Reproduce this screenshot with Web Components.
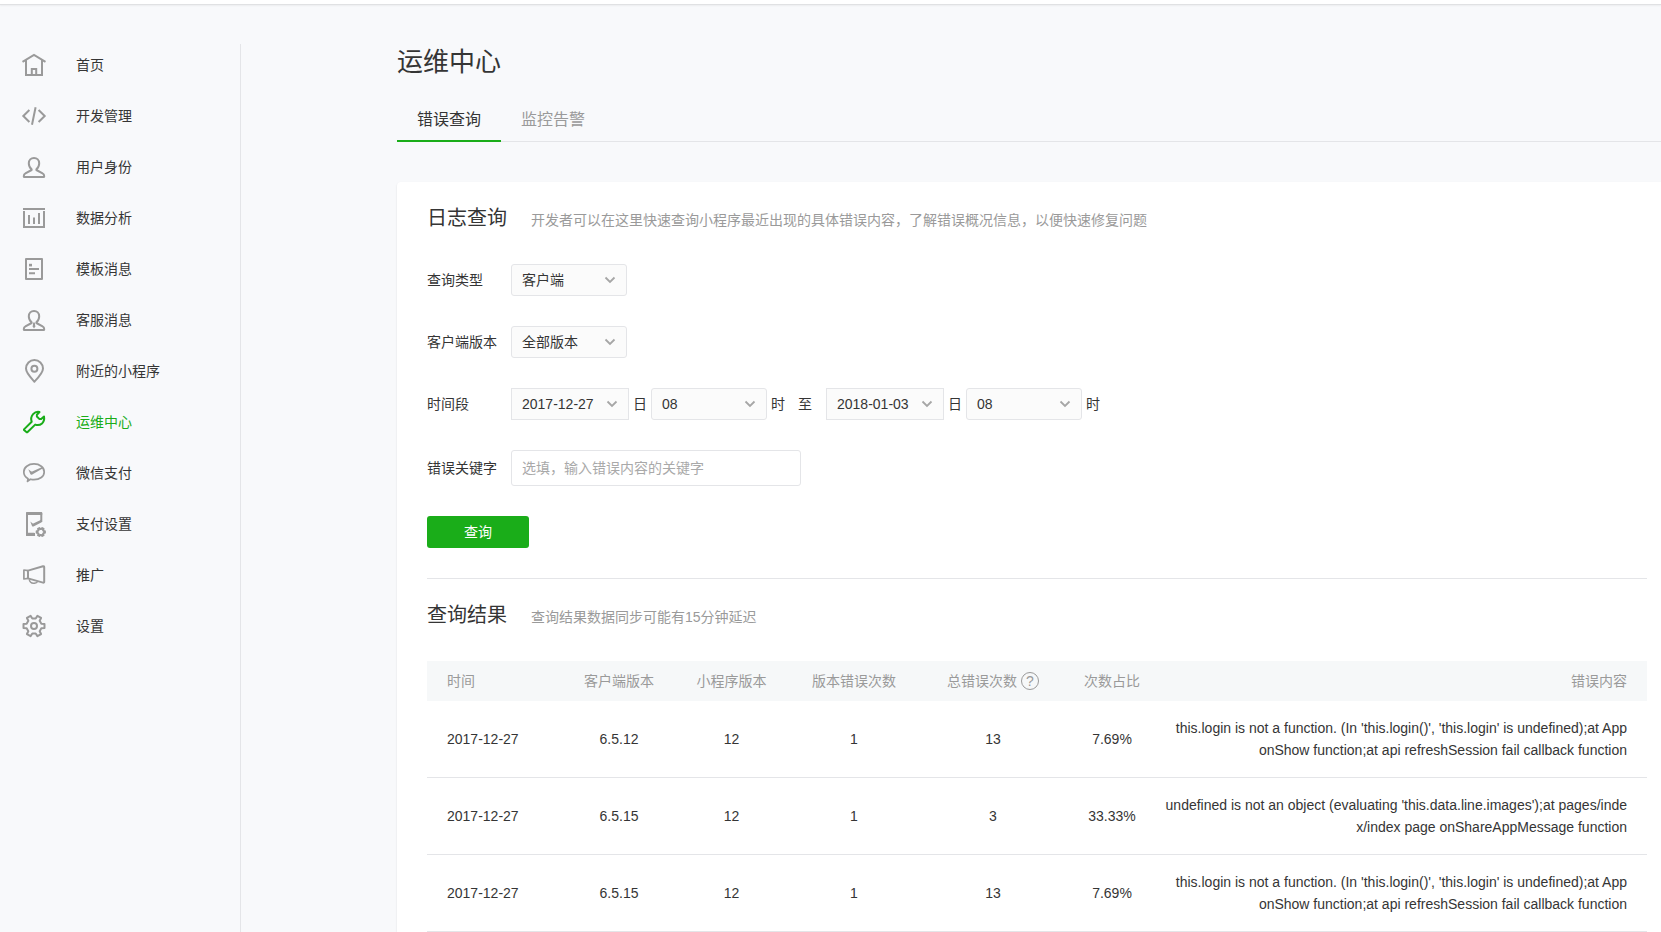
<!DOCTYPE html>
<html lang="zh-CN">
<head>
<meta charset="utf-8">
<meta name="viewport" content="width=device-width, initial-scale=1">
<title>运维中心</title>
<style>
  :root {
    --green: #1aad19;
    --text: #353535;
    --muted: #9a9a9a;
    --line: #e4e5e8;
    --page: #f8f9fb;
  }
  body {
    margin: 0;
    background: var(--page);
    color: var(--text);
    font: 14px/22px "Liberation Sans", "Noto Sans CJK SC", sans-serif;
  }
</style>
</head>
<body>
<ops-app></ops-app>

<script>
const define = (name, html, setup) => {
  const template = document.createElement('template');
  template.innerHTML = '<style>*{box-sizing:border-box}</style>' + html;
  customElements.define(name, class extends HTMLElement {
    constructor() {
      super();
      this.attachShadow({ mode: 'open' }).append(template.content.cloneNode(true));
    }
    connectedCallback() {
      if (setup && !this.ready) { this.ready = true; setup(this, this.shadowRoot); }
    }
  });
};

/* ---------- icons ---------- */
const gear = (cx, cy, outer, inner, teeth) => {
  const points = [];
  const step = Math.PI * 2 / teeth;
  for (let i = 0; i < teeth; i++) {
    const a = i * step;
    for (const [offset, r] of [[-0.29, inner], [-0.19, outer], [0.19, outer], [0.29, inner]]) {
      const t = a + offset * step;
      points.push((cx + r * Math.cos(t)).toFixed(2) + ' ' + (cy + r * Math.sin(t)).toFixed(2));
    }
  }
  return 'M' + points.join('L') + 'Z';
};
const person = '<path d="M9.6 14.2C7.6 12.6 6.8 10.3 6.8 8.2C6.8 5 9 2.9 12 2.9S17.2 5 17.2 8.2C17.2 10.3 16.4 12.6 14.4 14.2V15L20.6 18.4C21.8 19 22.2 20 22.2 21V21.5Q22.2 22.1 21.6 22.1H2.4Q1.8 22.1 1.8 21.5V21C1.8 20 2.2 19 3.4 18.4L9.6 15Z"/>';
const ICONS = {
  home: '<path stroke-linejoin="miter" d="M.5 8.8L12 2L23.5 8.8M4 7.6V22H20V7.6M9.8 22V16H14.2V22"/>',
  code: '<path stroke-linejoin="miter" d="M7.4 6L1.3 12L7.4 18M16.6 6L22.7 12L16.6 18M13.6 3.2L10 20.8"/>',
  user: person,
  chart: '<path stroke-linejoin="miter" d="M1 3H23M2 5V21H22V5M7 9V18M12 11.4V18M17 7V18"/>',
  template: '<rect x="4" y="2" width="16" height="20"/><path d="M7 8.1H10" stroke-width="2.6"/><path d="M7 12H17M7 16.2H13"/>',
  service: person + '<path stroke="none" fill="currentColor" d="M11.2 14.6H12.8L13.3 18.6L12 20.4L10.7 18.6Z"/>',
  pin: '<path d="M12.4 22.7C8.4 18.4 4 14 4 9.6C4 4.6 7.8 1 12.4 1S21 4.6 21 9.6C21 14 16.6 18.4 12.4 22.7Z"/><circle cx="12.4" cy="9.7" r="3"/>',
  wrench: '<path d="M2 19.4L9.7 11.8C8.9 9.4 9.4 6 11.1 4.1C12.8 2.2 15.2 1.6 17.5 2L14.9 4.8V6.5L17.5 9.1H19.2L22 6.5C22.5 9.2 21.7 11.8 20 13.4C18 15.2 15.5 15.4 13.2 14.6L5.6 22Q5 22.6 4.4 22L2 20Z"/>',
  pay: '<path d="M5.5 20.4L6.1 17.7C3.4 16.2 1.8 13.7 1.8 10.9C1.8 6.4 6.3 2.9 12 2.9S22.2 6.4 22.2 10.9S17.7 18.7 12 18.7C10.7 18.7 9.5 18.5 8.4 18.2Z" stroke-width="1.7"/><path stroke="none" fill="currentColor" d="M6.3 8.2L9 10.3Q9.8 10.8 10.7 10.3L19.7 6.3L21 7.2L10.2 13.6Q8.9 14.3 8.3 13.1Z"/>',
  paySet: '<path stroke-linejoin="miter" d="M13 22H5V2H19.3V10"/><path stroke="none" fill="currentColor" d="M4 .6Q4 0 4.6 0H19.6Q20.2 0 20.2 .6V3H4ZM4 20.8H12.2L13.2 24H4.6Q4 24 4 23.4ZM8.3 9.6L10.4 11.2Q11 11.6 11.8 11.2L19.7 7.6V10.2L11.5 14.4Q10.5 14.8 10 13.9Z"/><path d="' + gear(18.8, 20, 4.2, 3, 6) + '"/>',
  horn: '<path d="M6 7.6L21 3.2Q22.2 2.9 22.2 4.2V18.7Q22.2 19.9 21 19.6L6 15.4Z"/><path d="M6 7.6L1.9 7V16L6 15.4" stroke-width="1.7"/><path d="M7.2 16.4C7.8 19 10 20.6 12.4 20.2L14.6 19.6L15.4 18.6" stroke-width="1.5"/>',
  gear: '<path d="' + gear(12, 12, 10.7, 7.7, 6) + '"/><circle cx="12" cy="12" r="3"/>'
};
define('nav-icon', `
  <style>
    :host { display: block; width: 24px; height: 24px; }
    svg { display: block; overflow: visible; fill: none; stroke: currentColor; stroke-width: 2; stroke-linejoin: round; }
  </style>
  <svg width="24" height="24" viewBox="0 0 24 24" aria-hidden="true"></svg>`,
  (host, root) => { root.querySelector('svg').innerHTML = ICONS[host.getAttribute('name')]; });

/* ---------- sidebar ---------- */
define('nav-item', `
  <style>
    :host { display: block; --icon: var(--muted); }
    :host([current]) { --icon: var(--green); color: var(--green); }
    a { display: flex; align-items: center; gap: 30px; color: inherit; text-decoration: none; line-height: 24px; }
    nav-icon { color: var(--icon); }
  </style>
  <a href="#"><slot></slot></a>`,
  (host, root) => {
    const link = root.querySelector('a');
    const icon = document.createElement('nav-icon');
    icon.setAttribute('name', host.getAttribute('icon'));
    link.prepend(icon);
    if (host.hasAttribute('current')) link.setAttribute('aria-current', 'page');
  });
define('side-nav', `
  <style>
    :host { display: block; border-right: 1px solid var(--line); }
    nav { display: flex; flex-direction: column; gap: 27px; padding: 9px 22px; }
  </style>
  <nav aria-label="主菜单"><slot></slot></nav>`);

/* ---------- page parts ---------- */
define('tab-bar', `
  <style>
    :host { display: block; border-bottom: 1px solid var(--line); }
    nav { display: flex; font-size: 16px; line-height: 24px; margin-bottom: -1px; }
    a { padding: 10px 20px 8px; border-bottom: 2px solid transparent; color: var(--muted); text-decoration: none; }
    a[aria-current] { color: var(--text); border-color: var(--green); }
  </style>
  <nav><a href="#" aria-current="page">错误查询</a><a href="#">监控告警</a></nav>`);
define('section-head', `
  <style>
    :host { display: flex; align-items: baseline; gap: 24px; color: var(--muted); }
    h2 { margin: 0; font-size: 20px; line-height: 30px; font-weight: 400; color: var(--text); }
  </style>
  <h2><slot name="title"></slot></h2><slot></slot>`);

/* ---------- form ---------- */
const chevron = '<svg width="12" height="8" viewBox="0 0 12 8" aria-hidden="true"><path d="M1.5 1.5L6 6L10.5 1.5"/></svg>';
const boxStyle = `
    .box { display: inline-grid; align-items: center; }
    .box > * { grid-area: 1 / 1; }
    .box svg { justify-self: end; margin-right: 11px; fill: none; stroke: #a6a6a6; stroke-width: 1.8; pointer-events: none; }
    select, button {
      appearance: none; width: 116px; height: 32px; margin: 0; padding: 0 10px;
      font: inherit; color: inherit; text-align: left;
      border: 1px solid var(--line); border-radius: 3px; background: #fbfbfb;
    }`;
define('select-field', `
  <style>
    :host { display: flex; align-items: center; }
    label { width: 84px; }
    ${boxStyle}
  </style>
  <label for="s"></label>
  <span class="box"><select id="s"><option></option></select>${chevron}</span>`,
  (host, root) => {
    root.querySelector('label').textContent = host.getAttribute('label');
    root.querySelector('option').textContent = host.getAttribute('value');
  });
define('moment-field', `
  <style>
    :host { display: flex; align-items: center; gap: 4px; }
    ${boxStyle}
    button { width: 118px; border-radius: 0; }
  </style>
  <span class="box"><button id="d" type="button"></button>${chevron}</span>
  <label for="d">日</label>
  <span class="box"><select id="h"><option>08</option></select>${chevron}</span>
  <label for="h">时</label>`,
  (host, root) => { root.querySelector('button').textContent = host.getAttribute('date'); });
define('query-form', `
  <style>
    :host { display: block; }
    form { display: flex; flex-direction: column; align-items: flex-start; gap: 30px; }
    .row { display: flex; align-items: center; }
    .name { width: 84px; }
    .to { margin: 0 14px 0 13px; }
    input {
      width: 290px; height: 36px; padding: 0 10px; font: inherit; color: inherit;
      border: 1px solid var(--line); border-radius: 3px; background: #fff;
    }
    input::placeholder { color: #a9a9a9; opacity: 1; }
    button {
      width: 102px; height: 32px; padding: 0; border: 0; border-radius: 3px;
      font: inherit; color: #fff; background: var(--green);
    }
  </style>
  <form>
    <select-field label="查询类型" value="客户端"></select-field>
    <select-field label="客户端版本" value="全部版本"></select-field>
    <div class="row" role="group" aria-labelledby="period">
      <span class="name" id="period">时间段</span>
      <moment-field date="2017-12-27"></moment-field>
      <span class="to">至</span>
      <moment-field date="2018-01-03"></moment-field>
    </div>
    <div class="row">
      <label class="name" for="keyword">错误关键字</label>
      <input id="keyword" type="text" placeholder="选填，输入错误内容的关键字">
    </div>
    <button type="button">查询</button>
  </form>`);

/* ---------- results ---------- */
const LOGIN = "this.login is not a function. (In 'this.login()', 'this.login' is undefined);at App\nonShow function;at api refreshSession fail callback function";
const IMAGES = "undefined is not an object (evaluating 'this.data.line.images');at pages/index/index page onShareAppMessage function";
const ROWS = [
  ['2017-12-27', '6.5.12', '12', '1', '13', '7.69%', LOGIN],
  ['2017-12-27', '6.5.15', '12', '1', '3', '33.33%', IMAGES],
  ['2017-12-27', '6.5.15', '12', '1', '13', '7.69%', LOGIN]
];
define('result-table', `
  <style>
    :host { display: block; }
    table { width: 100%; border-collapse: separate; border-spacing: 0; table-layout: fixed; }
    th { height: 40px; padding: 0; font-weight: 400; color: var(--muted); background: #f6f8f9; }
    td { padding: 16px 0; border-bottom: 1px solid var(--line); text-align: center; word-break: break-all; white-space: pre-line; }
    th:first-child, td:first-child { text-align: left; padding-left: 20px; }
    th:last-child, td:last-child { text-align: right; padding-left: 5px; padding-right: 20px; }
    .date { width: 135px; } .client { width: 114px; } .app { width: 111px; }
    .errors { width: 134px; } .total { width: 144px; } .ratio { width: 94px; }
    .hint { display: flex; justify-content: center; align-items: center; gap: 4px; }
    .hint span {
      width: 18px; height: 18px; border: 1px solid var(--muted); border-radius: 50%;
      line-height: 16px; text-align: center;
    }
  </style>
  <table>
    <thead><tr>
      <th class="date">时间</th><th class="client">客户端版本</th><th class="app">小程序版本</th>
      <th class="errors">版本错误次数</th><th class="total"><div class="hint">总错误次数<span>?</span></div></th>
      <th class="ratio">次数占比</th><th>错误内容</th>
    </tr></thead>
    <tbody></tbody>
  </table>`,
  (host, root) => {
    const body = root.querySelector('tbody');
    for (const row of ROWS) {
      const tr = body.insertRow();
      for (const value of row) tr.insertCell().textContent = value;
    }
  });

/* ---------- page ---------- */
define('ops-app', `
  <style>
    :host { display: flex; flex-direction: column; min-height: 100vh; }
    header { height: 5px; background: #fff; border-bottom: 1px solid #e0e1e3; box-shadow: 0 1px 2px rgba(0, 0, 0, .05); }
    .body { flex: 1; display: grid; grid-template-columns: 241px minmax(0, 1fr); margin-top: 39px; }
    main { padding-left: 156px; }
    h1 { margin: 0; font-size: 26px; line-height: 36px; font-weight: 400; }
    tab-bar { margin-top: 18px; }
    .card { margin-top: 40px; padding: 21px 14px 0 30px; background: #fff; border-radius: 4px 0 0 0; box-shadow: 0 1px 2px rgba(0, 0, 0, .12); }
    query-form { margin-top: 31px; }
    hr { margin: 30px 0 21px; border: 0; border-top: 1px solid var(--line); }
    result-table { margin-top: 31px; }
  </style>
  <header></header>
  <div class="body">
    <side-nav>
      <nav-item icon="home">首页</nav-item>
      <nav-item icon="code">开发管理</nav-item>
      <nav-item icon="user">用户身份</nav-item>
      <nav-item icon="chart">数据分析</nav-item>
      <nav-item icon="template">模板消息</nav-item>
      <nav-item icon="service">客服消息</nav-item>
      <nav-item icon="pin">附近的小程序</nav-item>
      <nav-item icon="wrench" current>运维中心</nav-item>
      <nav-item icon="pay">微信支付</nav-item>
      <nav-item icon="paySet">支付设置</nav-item>
      <nav-item icon="horn">推广</nav-item>
      <nav-item icon="gear">设置</nav-item>
    </side-nav>
    <main>
      <h1>运维中心</h1>
      <tab-bar></tab-bar>
      <div class="card">
        <section-head><span slot="title">日志查询</span>开发者可以在这里快速查询小程序最近出现的具体错误内容，了解错误概况信息，以便快速修复问题</section-head>
        <query-form></query-form>
        <hr>
        <section-head><span slot="title">查询结果</span>查询结果数据同步可能有15分钟延迟</section-head>
        <result-table></result-table>
      </div>
    </main>
  </div>`);
</script>
</body>
</html>
